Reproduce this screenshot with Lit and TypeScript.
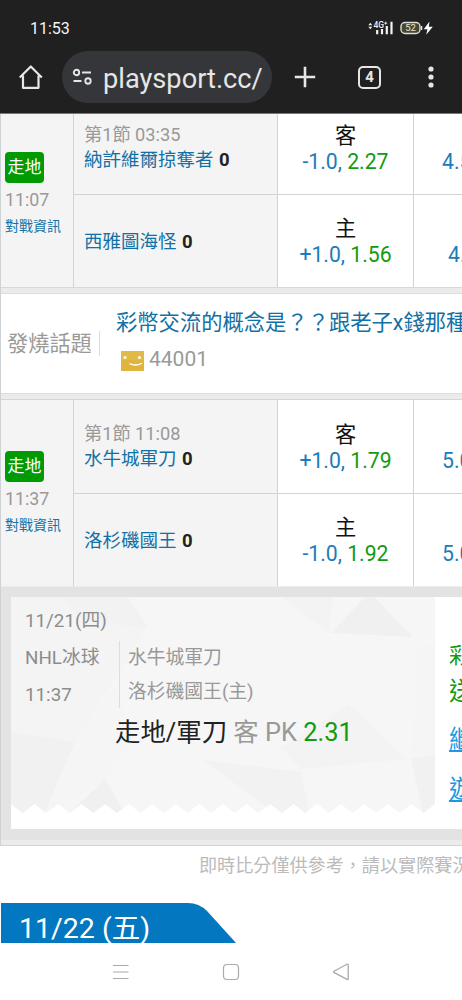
import { LitElement, html, css, svg } from "lit";
import { customElement, property } from "lit/decorators.js";

interface Side {
  name: string;
  score: number;
  side: string;
  spread: string;
  odds: string;
  total: string;
  clock?: string;
  inset?: boolean;
}

const nashville: Side[] = [
  { name: "納許維爾掠奪者", score: 0, side: "客", spread: "-1.0,", odds: "2.27", total: "4.5", clock: "第1節 03:35" },
  { name: "西雅圖海怪", score: 0, side: "主", spread: "+1.0,", odds: "1.56", total: "4.5", inset: true },
];
const buffalo: Side[] = [
  { name: "水牛城軍刀", score: 0, side: "客", spread: "+1.0,", odds: "1.79", total: "5.0", clock: "第1節 11:08" },
  { name: "洛杉磯國王", score: 0, side: "主", spread: "-1.0,", odds: "1.92", total: "5.0" },
];

@customElement("phone-header")
class PhoneHeader extends LitElement {
  static styles = css`
    :host { display: block; height: 113px; background: #202020; color: #e6e6e6; border-bottom: 1px solid #777; flex: none; }
    .status { display: flex; justify-content: space-between; height: 51px; padding: 5px 28px 0 30px; box-sizing: border-box; align-items: center; }
    .time { font-size: 16px; color: #f4f4f4; }
    .bar { display: flex; align-items: center; height: 52px; }
    .home { margin-left: 18px; }
    .url { margin-left: 18px; width: 210px; height: 52px; border-radius: 26px; background: #353639; display: flex; align-items: center; box-sizing: border-box; padding-left: 10px; overflow: hidden; }
    .address { font-size: 27.2px; line-height: 52px; margin-left: 9px; padding-top: 3px; width: 159px; overflow: hidden; white-space: nowrap; }
    .plus { margin-left: 22px; }
    .tabs { margin-left: 42px; width: 19px; height: 19px; border: 2px solid #e6e6e6; border-radius: 5px; font-size: 15px; font-weight: 700; line-height: 19px; text-align: center; }
    .more { margin-left: 47px; }
    svg { display: block; flex: none; }
  `;
  render() {
    return html`
      <div class="status">
        <span class="time">11:53</span>
        <svg width="66" height="16" viewBox="0 0 66 16">
          <path d="M.3 5.200l2-2.400 2 2.400zM.3 6.800l2 2.400 2-2.400z" fill="#eee" />
          <text x="5.500" y="8" font-size="8.500" font-weight="500" fill="#eee" font-family="Roboto, sans-serif">4G</text>
          <path d="M16.200 3.200h3M17.700 1.700v3" stroke="#eee" stroke-width=".9" />
          <path d="M9.200 10v4.200M14 9v5.200M18.800 6v8.200M23.500 1.700v12.500" stroke="#f2f2f2" stroke-width="2.200" />
          <rect x="33" y="2.500" width="19" height="11" rx="4" fill="#4a452f" stroke="#ddd" stroke-width="1.400" />
          <path d="M53.600 6v4" stroke="#ddd" stroke-width="1.400" />
          <text x="42.600" y="11.400" font-size="9.500" text-anchor="middle" fill="#efe9cf" font-family="Roboto, sans-serif">52</text>
          <path d="M61.500 1.500l-5.700 7.700h3.700L58.200 14.800l6.600-8h-4z" fill="#fff" />
        </svg>
      </div>
      <div class="bar">
        <svg class="home" width="26" height="26" viewBox="0 0 26 26" fill="none" stroke="#e6e6e6" stroke-width="2.200" stroke-linejoin="round">
          <path d="M1.800 13.500L12.800 2.500L23.800 13.500M5 11.500V23.800H20.500V11.500" />
        </svg>
        <div class="url">
          <svg width="22" height="18" viewBox="0 0 22 18" fill="none" stroke="#e6e6e6" stroke-width="1.900">
            <circle cx="4.500" cy="4.500" r="2.700" /><path d="M10 4.500h9" />
            <path d="M1.500 13h8" /><circle cx="16" cy="13" r="2.700" />
          </svg>
          <span class="address">playsport.cc/</span>
        </div>
        <svg class="plus" width="22" height="22" viewBox="0 0 22 22" stroke="#e6e6e6" stroke-width="2.600"><path d="M11 .8v20.400M.8 11h20.400" /></svg>
        <div class="tabs">4</div>
        <svg class="more" width="6" height="22" viewBox="0 0 6 22" fill="#e6e6e6"><circle cx="3" cy="3" r="2.600" /><circle cx="3" cy="11" r="2.600" /><circle cx="3" cy="19" r="2.600" /></svg>
      </div>
    `;
  }
}

@customElement("game-table")
class GameTable extends LitElement {
  static styles = css`
    :host { display: flex; height: 186px; border-top: 1px solid #d3d6d8; }
    .info { width: 68px; flex: none; background: #f4f4f4; border-right: 1px solid #d0d4d7; padding: 51px 0 0 4px; }
    .badge { width: 39px; height: 31px; border-radius: 4px; background: #009a05; color: #fff; font-size: 17px; line-height: 31px; text-align: center; white-space: nowrap; }
    .start { font-size: 17.800px; line-height: 22px; margin-top: 6px; color: #999; }
    .link { font-size: 14px; line-height: 18px; margin-top: 6px; color: #1874a8; white-space: nowrap; }
    .rows { flex: 1; min-width: 0; }
    .row { display: flex; height: 93px; box-sizing: border-box; }
    .row + .row { border-top: 1px solid #d3d3d3; }
    .team { padding: 1px 0 0 10px; flex: none; background: #f4f4f4; border-right: 1px solid #d3d3d3; display: flex; flex-direction: column; justify-content: center; width: 193px; font-size: 18.500px; line-height: 26px; white-space: nowrap; }
    .clock { color: #999; font-size: 18.200px; line-height: 24px; }
    .name { color: #1170a5; word-spacing: 1px; }
    .score { color: #222; font-weight: 700; }
    .line { width: 136px; flex: none; border-right: 1px solid #d3d3d3; display: flex; flex-direction: column; justify-content: center; text-align: center; font-size: 21.200px; line-height: 26px; padding-top: 2px; box-sizing: border-box; height: 100%; color: #1b7cba; white-space: nowrap; }
    .side { color: #111; }
    .odds { color: #129a12; }
    .total { flex: 1; overflow: hidden; white-space: nowrap; padding: 48px 0 0 28px; font-size: 21.200px; line-height: 26px; color: #1b7cba; }
    .row + .row .total { padding-top: 47px; }
    .row + .row .total.inset { padding-left: 34px; }
  `;
  @property({ attribute: false }) sides: Side[] = [];
  @property() start = "";
  render() {
    return html`
      <div class="info">
        <div class="badge">走地</div>
        <div class="start">${this.start}</div>
        <div class="link">對戰資訊</div>
      </div>
      <div class="rows">
        ${this.sides.map((s) => html`
          <div class="row">
            <div class="team">
              ${s.clock ? html`<div class="clock">${s.clock}</div>` : ""}
              <div class="name">${s.name} <span class="score">${s.score}</span></div>
            </div>
            <div class="line">
              <div class="side">${s.side}</div>
              <div>${s.spread} <span class="odds">${s.odds}</span></div>
            </div>
            <div class="total ${s.inset ? "inset" : ""}">${s.total}</div>
          </div>`)}
      </div>
    `;
  }
}

@customElement("bet-ticket")
class BetTicket extends LitElement {
  static styles = css`
    :host { display: block; background: #e3e3e3; padding: 10px 0 11px 10px; border-top: 1px solid #ececec; }
    .card { display: flex; height: 232px; background: #fff; overflow: hidden; }
    .paper { width: 424px; height: 232px; flex: none; display: grid; }
    .paper > * { grid-area: 1 / 1; }
    .body { padding: 11px 0 0 14px; color: #999; font-size: 18.800px; line-height: 26px; white-space: nowrap; }
    .meta { color: #8c8c8c; }
    .cols { display: flex; margin-top: 7px; height: 67px; }
    .left { width: 94px; border-right: 1px solid #ddd; color: #8c8c8c; line-height: 37px; }
    .left div:first-child { line-height: 35px; margin-bottom: 1px; }
    .right { padding-left: 8px; line-height: 34px; }
    .pick { font-size: 25.400px; line-height: 36px; margin: 6px 0 0 90px; }
    .main { color: #222; }
    .win { color: #129a12; }
    .extra { padding: 45px 0 0 14px; white-space: nowrap; color: #129a12; font-size: 25px; line-height: 36px; }
    .small { font-size: 21.200px; line-height: 28px; }
    .send { margin-top: 4px; }
    .first { margin-top: 14px; color: #1b9ae0; text-decoration: underline; line-height: 32px; }
    .second { margin-top: 18px; color: #1b9ae0; text-decoration: underline; line-height: 32px; }
  `;
  render() {
    const teeth = Array.from({ length: 18 }, (_, i) => {
      const x = 424 - i * 23.56;
      return `L${(x - 11.78).toFixed(1)} 216 L${(x - 23.56).toFixed(1)} 207`;
    }).join(" ");
    return html`
      <div class="card">
        <div class="paper">
          <svg width="424" height="232" viewBox="0 0 424 232">
            <defs><clipPath id="edge"><path d=${`M0 0H424V207 ${teeth}Z`} /></clipPath></defs>
            <g clip-path="url(#edge)">
              ${svg`
              <rect width="424" height="232" fill="#f6f6f6" />
              <path d="M0 0H117L137 30L64 145L0 135Z" fill="#f4f4f4" />
              <path d="M117 0L137 30L74 26L50 0Z" fill="#f2f2f2" />
              <path d="M0 135L64 145L32 220H0Z" fill="#f1f1f1" />
              <path d="M64 145L104 90L124 140L94 182L35 220Z" fill="#f5f5f5" />
              <path d="M94 182L116 220H54Z" fill="#f0f0f0" />
              <path d="M192 163L290 175L299 220H269Z" fill="#f2f2f2" />
              <path d="M270 0H322L318 36Z" fill="#f3f3f3" />
              <path d="M320 36L354 0H363L402 40Z" fill="#f0f0f0" />
              <path d="M338 107L395 162L290 172L270 151Z" fill="#f3f3f3" />
              <path d="M400 162L424 158V220H413Z" fill="#f1f1f1" />
              <path d="M407 50L424 46V158L400 162Z" fill="#f5f5f5" />`}
            </g>
          </svg>
          <div class="body">
            <div class="meta">11/21(四)</div>
            <div class="cols">
              <div class="left"><div>NHL冰球</div><div>11:37</div></div>
              <div class="right"><div>水牛城軍刀</div><div>洛杉磯國王(主)</div></div>
            </div>
            <div class="pick"><span class="main">走地/軍刀</span> 客 PK <span class="win">2.31</span></div>
          </div>
        </div>
        <div class="extra">
          <div class="small">彩</div>
          <div class="send">送</div>
          <div class="first">繼</div>
          <div class="second">遊</div>
        </div>
      </div>
    `;
  }
}

@customElement("app-root")
class AppRoot extends LitElement {
  static styles = css`
    :host { display: flex; flex-direction: column; width: 462px; height: 1000px; overflow: hidden; background: #fff; font-family: Roboto, "Noto Sans CJK TC", sans-serif; }
    .page { height: 829px; flex: none; overflow: hidden; }
    .board { border-left: 1px solid #ccd2d5; background: #fff; }
    .clipped { margin-top: -14px; }
    .gap { height: 5px; background: #ebebeb; border-top: 1px solid #d8d8d8; border-bottom: 1px solid #ddd; }
    .topic { height: 99px; display: flex; box-sizing: border-box; overflow: hidden; white-space: nowrap; font-size: 21.300px; }
    .heading { padding-left: 6px; width: 92px; color: #999; line-height: 99px; font-size: 21.200px; flex: none; }
    .bar { width: 1px; height: 25px; margin-top: 37px; background: #ddd; flex: none; }
    .thread { padding: 13px 0 0 16px; }
    .title { color: #1170a5; line-height: 32px; }
    .count { display: flex; align-items: center; color: #999; font-size: 21px; line-height: 30px; margin-top: 5px; gap: 5px; padding-left: 5px; }
    .face { display: block; margin-top: 4px; }
    .gap2 { height: 6px; background: #ebebeb; border-top: 1px solid #ddd; box-sizing: border-box; }
    .end { height: 5px; background: #ebebeb; border-bottom: 1px solid #d3d3d3; }
    .note { padding-left: 199px; font-size: 18.100px; line-height: 26px; height: 26px; margin-top: 7px; color: #bbb; white-space: nowrap; overflow: hidden; }
    .day { margin: 24px 0 0 1px; width: 235px; height: 40px; display: grid; overflow: hidden; }
    .day > * { grid-area: 1 / 1; }
    .date { padding-left: 18px; color: #fff; font-size: 28.500px; line-height: 51px; white-space: nowrap; }
    .nav { flex: 1; display: flex; align-items: flex-start; padding: 20px 0 0 112px; gap: 93px; }
  `;
  render() {
    return html`
      <phone-header></phone-header>
      <div class="page">
        <div class="board">
          <game-table class="clipped" start="11:07" .sides=${nashville}></game-table>
          <div class="gap"></div>
          <div class="topic">
            <div class="heading">發燒話題</div>
            <div class="bar"></div>
            <div class="thread">
              <div class="title">彩幣交流的概念是？？跟老子x錢那種</div>
              <div class="count">
                <svg class="face" width="23" height="20" viewBox="0 0 23 20">
                  <rect width="23" height="20" fill="#deb43c" />
                  <rect width="23" height="9" fill="#e0b947" />
                  <circle cx="4" cy="6.500" r="1.500" fill="#fff" /><circle cx="18.500" cy="6.500" r="1.500" fill="#fff" />
                  <path d="M8.500 12.500q6 3.200 12.500-.3" fill="none" stroke="#fff" stroke-width="1.300" />
                </svg>
                <span>44001</span>
              </div>
            </div>
          </div>
          <div class="gap2"></div>
          <game-table start="11:37" .sides=${buffalo}></game-table>
          <bet-ticket></bet-ticket>
          <div class="end"></div>
        </div>
        <div class="note">即時比分僅供參考，請以實際賽況</div>
        <div class="day">
          <svg width="235" height="40" viewBox="0 0 235 40"><path d="M0 0H187Q198 0 206 8L235 40H0Z" fill="#0377c0" /></svg>
          <div class="date">11/22 (五)</div>
        </div>
      </div>
      <div class="nav">
        <svg width="17" height="18" viewBox="0 0 17 18" stroke="#aaa" stroke-width="1.200"><path d="M1 2.500h15.500M1 9h15.500M1 15.500h15.500" /></svg>
        <svg width="18" height="18" viewBox="0 0 18 18" fill="none" stroke="#aaa" stroke-width="1.200"><rect x="1.500" y="1.500" width="15" height="15" rx="3.500" /></svg>
        <svg width="18" height="18" viewBox="0 0 18 18" fill="none" stroke="#aaa" stroke-width="1.300" stroke-linejoin="round"><path d="M14 1.200L.9 8.200Q0 8.800 .9 9.400L14 16.400Q15.200 16.800 15.200 15.500V2Q15.200 .8 14 1.200Z" /></svg>
      </div>
    `;
  }
}
